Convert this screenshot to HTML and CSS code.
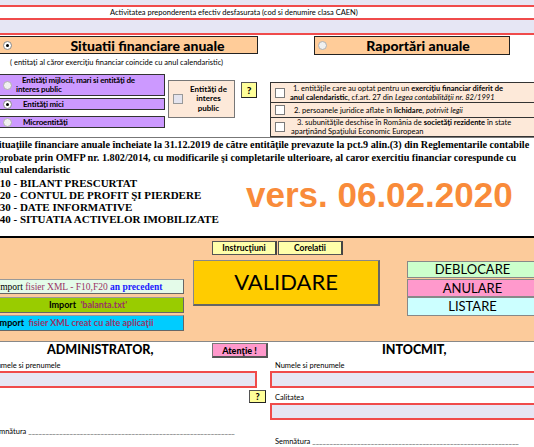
FILE: index.html
```html
<!DOCTYPE html>
<html lang="ro">
<head>
    <meta charset="UTF-8">
    <title>Situatii financiare anuale</title>
    <link rel="stylesheet" href="styles.css">
</head>
<body>
    <div class="sheet">
        <div class="caen">
            <div class="caen-field">Activitatea preponderenta efectiv desfasurata (cod si denumire clasa CAEN)</div>
            <div class="caen-code"></div>
        </div>

        <div class="report-type">
            <div class="type-box type-main">
                <span class="radio checked"></span>
                <span class="type-title">Situatii financiare anuale</span>
            </div>
            <div class="type-box type-alt">
                <span class="radio"></span>
                <span class="type-title">Raportări anuale</span>
            </div>
        </div>
        <div class="type-note">( entitaţi al căror exerciţiu financiar coincide cu anul calendaristic)</div>

        <div class="entities">
            <div class="entity-col">
                <div class="entity entity-big">
                    <span class="radio"></span>
                    <span class="entity-text">Entităţi mijlocii, mari si entităţi de<br>interes public</span>
                </div>
                <div class="entity entity-mid">
                    <span class="radio checked"></span>
                    <span class="entity-text">Entităţi mici</span>
                </div>
                <div class="entity entity-small">
                    <span class="radio"></span>
                    <span class="entity-text">Microentităţi</span>
                </div>
            </div>
            <div class="public-box">
                <span class="check"></span>
                <span class="public-label">Entităţi de<br>interes<br>public</span>
            </div>
            <div class="help help-top">?</div>
            <div class="special-list">
                <div class="special-row row-one">
                    <span class="check"></span>
                    <div class="special-text">1. entităţile care au optat pentru un <b>exerciţiu financiar diferit de</b><br><b>anul calendaristic</b>, cf.art. 27 din <i>Legea contabilităţii nr. 82/1991</i></div>
                </div>
                <div class="special-row row-two">
                    <span class="check"></span>
                    <div class="special-text">2. persoanele juridice aflate în <b>lichidare</b>, <i>potrivit legii</i></div>
                </div>
                <div class="special-row row-three">
                    <span class="check"></span>
                    <div class="special-text">3. subunităţile deschise în România de <b>societăţi rezidente</b> în state<br>aparţinând Spaţiului Economic European</div>
                </div>
            </div>
        </div>
        <div class="rule"></div>

        <div class="legal">
            Situaţiile financiare anuale încheiate la 31.12.2019 de către entităţile prevazute la pct.9 alin.(3) din Reglementarile contabile<br>
            aprobate prin OMFP nr. 1.802/2014, cu modificarile şi completarile ulterioare, al caror exercitiu financiar corespunde cu<br>
            anul calendaristic
        </div>

        <div class="forms-row">
            <div class="forms">
                <div>F10 - BILANT PRESCURTAT</div>
                <div>F20 - CONTUL DE PROFIT ŞI PIERDERE</div>
                <div>F30 - DATE INFORMATIVE</div>
                <div>F40 - SITUATIA ACTIVELOR IMOBILIZATE</div>
            </div>
            <div class="version">vers. 06.02.2020</div>
        </div>
        <div class="divider"></div>

        <div class="actions">
            <div class="tabs">
                <div class="tab">Instrucţiuni</div>
                <div class="tab">Corelatii</div>
            </div>
            <div class="action-row">
                <div class="imports">
                    <div class="import import-prev"><span class="serif">Import</span> <span class="serif purple">fisier XML - F10,F20</span> <span class="serif blue">an precedent</span></div>
                    <div class="import import-bal">Import &nbsp;<span class="purple">'balanta.txt'</span></div>
                    <div class="import import-xml">Import &nbsp;<span class="purple">fisier XML creat cu alte aplicaţii</span></div>
                </div>
                <div class="validate">VALIDARE</div>
                <div class="side-buttons">
                    <div class="side-btn btn-unlock">DEBLOCARE</div>
                    <div class="side-btn btn-cancel">ANULARE</div>
                    <div class="side-btn btn-print">LISTARE</div>
                </div>
            </div>
        </div>

        <div class="sign-head">
            <div class="sign-title admin-title">ADMINISTRATOR,</div>
            <div class="warning">Atenţie !</div>
            <div class="sign-title made-title">INTOCMIT,</div>
        </div>
        <div class="sign-body">
            <div class="sign-col sign-left">
                <div class="field-label">Numele si prenumele</div>
                <div class="field"></div>
                <div class="help help-sign">?</div>
                <div class="signature signature-left">Semnătura <span class="sign-line">____________________________________________________________</span></div>
            </div>
            <div class="sign-col sign-right">
                <div class="field-label">Numele si prenumele</div>
                <div class="field"></div>
                <div class="field-label label-gap">Calitatea</div>
                <div class="field"></div>
                <div class="signature signature-right">Semnătura <span class="sign-line">____________________________________________________________</span></div>
            </div>
        </div>
    </div>
</body>
</html>
```

FILE: styles.css
```css
body {
    margin: 0;
    width: 534px;
    height: 447px;
    overflow: hidden;
    background-color: #fff;
    font-family: Lato, "Liberation Sans", sans-serif;
    color: #000;
}
.sheet {
    width: 534px;
}

/* CAEN band */
.caen {
    background-color: #e6e6f4;
    padding-top: 5px;
    border-bottom: 2px solid #f04b4b;
}
.caen-field {
    background-color: #fff;
    border-top: 2px solid #f04b4b;
    border-bottom: 2px solid #f04b4b;
    height: 11px;
    line-height: 11px;
    font-size: 7.5px;
    padding-left: 110px;
    white-space: nowrap;
}
.caen-code {
    height: 13px;
}

/* report type */
.report-type {
    display: flex;
    margin-top: 1px;
    height: 19px;
}
.type-box {
    display: flex;
    align-items: center;
    box-sizing: border-box;
    height: 19px;
    background-color: #ffcc99;
    border: 1px solid #222;
}
.type-main {
    margin-left: -8px;
    width: 266px;
    height: 18px;
}
.type-alt {
    margin-left: 56px;
    width: 196px;
}
.type-main .radio {
    margin-left: 10px;
}
.type-alt .radio {
    margin-left: 3px;
}
.type-title {
    flex: 1;
    text-align: center;
    font-weight: 900;
    font-size: 14px;
}
.type-main .type-title {
    padding-left: 26px;
}
.type-note {
    margin: 3px 0 0 10px;
    font-size: 7.5px;
    line-height: 9px;
    white-space: nowrap;
}

.radio {
    display: inline-block;
    flex: none;
    box-sizing: border-box;
    width: 9px;
    height: 9px;
    border-radius: 50%;
    background-color: #f0f0f0;
    border: 1px solid #b0b0b0;
    position: relative;
}
.radio.checked {
    background-color: #fff;
    border-color: #888;
}
.radio.checked::after {
    content: "";
    position: absolute;
    left: 2px;
    top: 2px;
    width: 3px;
    height: 3px;
    border-radius: 50%;
    background-color: #000;
}
.check {
    display: inline-block;
    flex: none;
    box-sizing: border-box;
    width: 10px;
    height: 10px;
    background-color: #fff;
    border: 1px solid #7a7a7a;
}

/* entity types */
.entities {
    display: flex;
    align-items: flex-start;
    margin-top: 6px;
    height: 64px;
}
.entity-col {
    margin-left: -8px;
    width: 173px;
    flex: none;
}
.entity {
    display: flex;
    align-items: center;
    box-sizing: border-box;
    background-color: #cc99ff;
    border: 1px solid #333;
    font-weight: bold;
    font-size: 8px;
    letter-spacing: -0.15px;
    white-space: nowrap;
}
.entity .radio {
    margin-left: 10px;
}
.entity-big {
    margin-top: 1px;
    height: 22px;
    line-height: 9.5px;
}
.entity-big .entity-text {
    margin-left: 4px;
    text-indent: 6px;
}
.entity-mid {
    margin-top: 2px;
    height: 12px;
}
.entity-small {
    margin-top: 6px;
    height: 12px;
}
.entity-mid .entity-text,
.entity-small .entity-text {
    margin-left: 11px;
}

.public-box {
    display: flex;
    align-items: center;
    flex: none;
    box-sizing: border-box;
    margin: 7px 0 0 3px;
    width: 67px;
    height: 38px;
    background-color: #fde9d9;
    border: 1px solid #777;
}
.public-box .check {
    margin-left: 4px;
    background-color: #e4e4ee;
    border-color: #999;
}
.public-label {
    flex: 1;
    text-align: center;
    font-weight: bold;
    font-size: 8px;
    line-height: 9.5px;
}

.help {
    box-sizing: border-box;
    flex: none;
    background-color: #ffff99;
    border: 1px solid #555;
    border-right-color: #222;
    border-bottom-color: #222;
    text-align: center;
    font-weight: 900;
    font-size: 10px;
}
.help-top {
    margin: 9px 0 0 6px;
    width: 16px;
    height: 16px;
    line-height: 14px;
}

.special-list {
    flex: 1;
    margin: 9px -10px 0 13px;
    border-top: 1px solid #333;
    border-left: 1px solid #333;
    background-color: #fde9d9;
}
.special-row {
    display: flex;
    align-items: center;
    box-sizing: border-box;
    border-bottom: 1px solid #333;
    font-size: 7.5px;
    line-height: 9px;
    white-space: nowrap;
}
.special-row .check {
    margin-left: 4px;
}
.special-text {
    margin-left: 5px;
}
.row-one {
    height: 20px;
}
.row-one .special-text {
    text-indent: 3px;
}
.row-two {
    height: 15px;
}
.row-two .special-text {
    margin-left: 9px;
}
.row-three {
    height: 19px;
}
.row-three .special-text {
    margin-left: 6px;
    text-indent: 6px;
}

.rule {
    border-top: 1px solid #777;
}

/* legal text */
.legal {
    margin-left: -7px;
    padding-top: 1px;
    font-family: "Liberation Serif", serif;
    font-weight: bold;
    font-size: 10.2px;
    line-height: 12.5px;
    white-space: nowrap;
}
.forms-row {
    display: flex;
    height: 48px;
}
.forms {
    flex: none;
    width: 253px;
    margin-left: -7px;
    font-family: "Liberation Serif", serif;
    font-weight: bold;
    font-size: 11px;
    line-height: 12px;
    white-space: nowrap;
}
.version {
    margin-top: -2px;
    font-family: "Liberation Sans", Arial, sans-serif;
    font-weight: bold;
    font-size: 35px;
    line-height: 40px;
    color: #f98b3a;
    white-space: nowrap;
}
.divider {
    margin-top: 11px;
    border-top: 2px solid #000;
}

/* actions */
.actions {
    height: 103px;
    background-color: #fccb9b;
    border-bottom: 1px solid #888;
}
.tabs {
    display: flex;
    gap: 1px;
    padding: 3px 0 0 212px;
}
.tab {
    box-sizing: border-box;
    width: 65px;
    height: 14px;
    line-height: 12px;
    background-color: #ffffaa;
    border: 1px solid #555;
    border-right: 2px solid #444;
    text-align: center;
    font-weight: bold;
    font-size: 8.5px;
}
.action-row {
    display: flex;
    align-items: flex-start;
    margin-top: 5px;
}
.imports {
    flex: none;
    width: 192px;
    margin-left: -8px;
    padding-top: 19px;
}
.import {
    box-sizing: border-box;
    border: 1px solid #999;
    border-right-color: #666;
    border-bottom-color: #666;
    font-weight: bold;
    font-size: 9px;
    white-space: nowrap;
}
.import-prev {
    height: 15px;
    line-height: 13px;
    padding-left: 4px;
    background-color: #e4fbe9;
    font-weight: normal;
}
.import-bal {
    height: 16px;
    line-height: 14px;
    margin-top: 3px;
    text-align: center;
    background-color: #99cc00;
}
.import-xml {
    height: 16px;
    line-height: 14px;
    margin-top: 2px;
    padding-left: 4px;
    background-color: #00ccff;
}
.serif {
    font-family: "Liberation Serif", serif;
    font-size: 9.5px;
}
.purple {
    color: #993366;
}
.blue {
    color: #1a1aff;
    font-weight: bold;
}
.validate {
    flex: none;
    box-sizing: border-box;
    margin-left: 9px;
    width: 187px;
    height: 46px;
    line-height: 42px;
    background-color: #ffcc00;
    border: 1px solid #888;
    border-right: 2px solid #666;
    border-bottom: 2px solid #666;
    text-align: center;
    font-size: 22px;
}
.side-buttons {
    flex: none;
    margin: 1px 0 0 27px;
    width: 131px;
}
.side-btn {
    box-sizing: border-box;
    border: 1px solid #888;
    text-align: center;
    font-size: 13px;
}
.btn-unlock {
    height: 17px;
    line-height: 15px;
    background-color: #ccffcc;
}
.btn-cancel {
    height: 18px;
    line-height: 16px;
    background-color: #ff99cc;
    margin-top: 1px;
}
.btn-print {
    height: 19px;
    line-height: 17px;
    background-color: #ccffff;
}

/* signatures */
.sign-head {
    display: grid;
    grid-template-columns: 212px 56px 1fr;
    height: 16px;
}
.sign-title {
    font-weight: 900;
    font-size: 12.5px;
    line-height: 16px;
    white-space: nowrap;
}
.admin-title {
    padding-left: 47px;
}
.made-title {
    padding-left: 114px;
}
.warning {
    box-sizing: border-box;
    margin-top: 1px;
    height: 15px;
    line-height: 13px;
    background-color: #ff99cc;
    border: 1px solid #777;
    border-right: 2px solid #555;
    border-bottom: 2px solid #555;
    text-align: center;
    font-weight: 900;
    font-size: 9px;
}
.sign-body {
    display: flex;
}
.sign-col {
    flex: none;
}
.sign-left {
    margin-left: -14px;
    width: 271px;
}
.sign-right {
    margin-left: 13px;
    width: 270px;
}
.field-label {
    margin-top: 3px;
    padding-left: 5px;
    font-size: 7.5px;
    line-height: 9px;
}
.label-gap {
    margin-top: 5px;
}
.field {
    box-sizing: border-box;
    margin-top: 1px;
    height: 17px;
    background-color: #e6e6f4;
    border: 2px solid #f04b4b;
}
.help-sign {
    margin: 2px 0 0 263px;
    width: 17px;
    height: 13px;
    line-height: 11px;
    font-size: 9px;
}
.signature {
    padding-left: 5px;
    font-size: 7.5px;
    white-space: nowrap;
    overflow: hidden;
}
.signature-left {
    margin-top: 24px;
    width: 254px;
}
.signature-right {
    margin-top: 17px;
}
.sign-line {
    color: #444;
}
```
